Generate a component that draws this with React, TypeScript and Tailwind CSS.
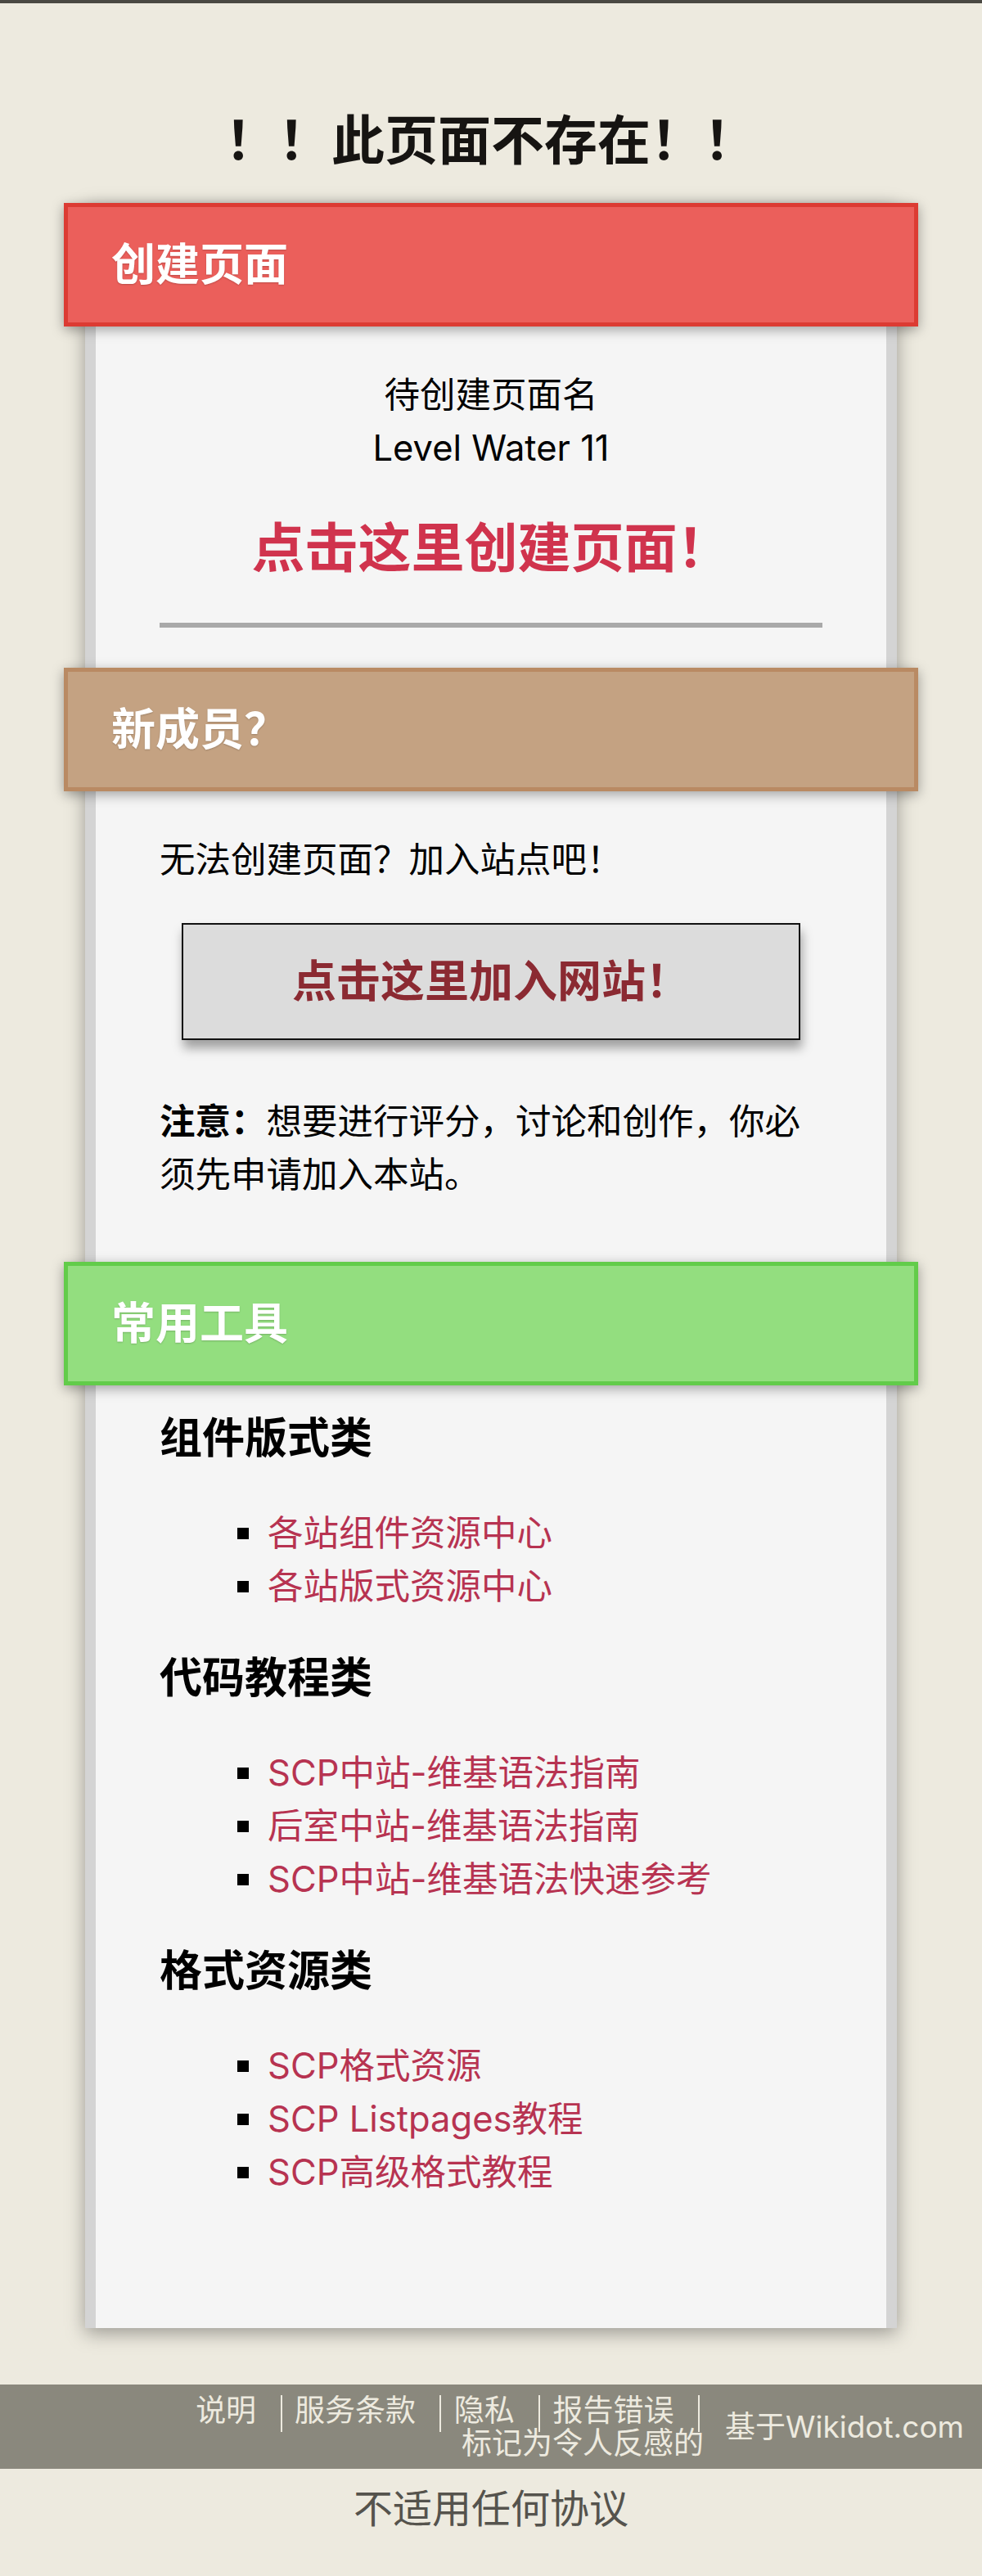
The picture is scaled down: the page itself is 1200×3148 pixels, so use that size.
import React from 'react';

const Header = ({ title, tone }: { title: string; tone: 'red' | 'brown' | 'green' }) => {
    const toneClass =
        tone === 'red'
            ? 'border-[#dc3b33] bg-[#eb5f5b]'
            : tone === 'brown'
            ? 'border-[#b98a63] bg-[#c4a282]'
            : 'border-[#62cc4a] bg-[#93de7f]';
    return (
        <div
            className={`relative z-10 -mx-[39px] flex h-[151px] items-center border-[5px] pl-[53px] text-[54px] font-bold text-white shadow-[0_4px_14px_rgba(0,0,0,0.35)] [text-shadow:0_1px_2px_rgba(0,0,0,0.2)] ${toneClass}`}
        >
            {title}
        </div>
    );
};

const Group = ({ title, items, first }: { title: string; items: string[]; first?: boolean }) => (
    <div>
        <h3 className={`${first ? 'mt-[33px]' : 'mt-[48px]'} text-[52px] font-bold leading-[64px] text-black`}>{title}</h3>
        <ul className="mt-[51px]">
            {items.map((item) => (
                <li key={item} className="flex items-center leading-[65px]">
                    <span className="ml-[95px] mr-[23px] inline-block h-[14px] w-[14px] bg-black" />
                    <a className="text-[#b73351]">{item}</a>
                </li>
            ))}
        </ul>
    </div>
);

const Sep = () => (
    <span className="-my-[5px] ml-[19px] mr-[5px] inline-block h-[45px] w-[2px] bg-[#edeadf] align-middle" />
);

export default function App() {
    const footerLinks = ['说明', '服务条款', '隐私', '报告错误', '标记为令人反感的'];

    return (
        <div className="min-h-[3148px] bg-[#edeadf] font-[Inter,'Noto_Sans_CJK_SC',sans-serif] text-[43.5px] text-black">
            <div className="h-[4px] bg-[#4a4943]" />

            <h1 className="mb-[36px] mt-[128px] text-center text-[65px] font-bold leading-[80px] text-[#161412]">
                ！！此页面不存在！！
            </h1>

            <div className="mx-auto w-[992px] border-x-[13px] border-[#d4d4d4] bg-[#f5f5f5] pb-[158px] shadow-[0_6px_22px_rgba(0,0,0,0.35)]">
                <Header title="创建页面" tone="red" />
                <div className="px-[78px]">
                    <p className="pt-[51px] text-center leading-[65px]">
                        待创建页面名
                        <br />
                        Level Water 11
                    </p>
                    <div className="mt-[50px] text-center text-[65px] font-bold leading-[80px] text-[#d0334d]">
                        点击这里创建页面！
                    </div>
                    <div className="mb-[49px] mt-[51px] h-[6px] bg-[#a9a9a9]" />
                </div>

                <Header title="新成员？" tone="brown" />
                <div className="px-[78px]">
                    <p className="mt-[51px] leading-[65px]">无法创建页面？加入站点吧！</p>
                    <div className="mx-auto mt-[45px] flex h-[143px] w-[756px] items-center justify-center border-2 border-[#111] bg-[#dcdcdc] text-[54px] font-bold text-[#8b2a32] shadow-[2px_10px_12px_rgba(0,0,0,0.35)]">
                        点击这里加入网站！
                    </div>
                    <p className="mb-[74px] mt-[67px] leading-[65px]">
                        <strong>注意：</strong>想要进行评分，讨论和创作，你必须先申请加入本站。
                    </p>
                </div>

                <Header title="常用工具" tone="green" />
                <div className="px-[78px]">
                    <Group first title="组件版式类" items={['各站组件资源中心', '各站版式资源中心']} />
                    <Group
                        title="代码教程类"
                        items={['SCP中站-维基语法指南', '后室中站-维基语法指南', 'SCP中站-维基语法快速参考']}
                    />
                    <Group title="格式资源类" items={['SCP格式资源', 'SCP Listpages教程', 'SCP高级格式教程']} />
                </div>
            </div>

            <div className="mt-[69px] flex h-[103px] items-center justify-end bg-[#8a887d] pr-[22px] text-[#edeadf]">
                <div className="w-[624px] text-right text-[37px] leading-[37px]">
                    {footerLinks.map((link, i) => (
                        <React.Fragment key={link}>
                            {i > 0 && (
                                <>
                                    {' '}
                                    <Sep />{' '}
                                </>
                            )}
                            <a className="whitespace-nowrap">{link}</a>
                        </React.Fragment>
                    ))}
                </div>
                <div className="ml-[26px] text-[37px] leading-[40px]">基于Wikidot.com</div>
            </div>

            <p className="pb-[52px] pt-[19px] text-center text-[48px] leading-[60px] text-[#55534d]">不适用任何协议</p>
        </div>
    );
}
